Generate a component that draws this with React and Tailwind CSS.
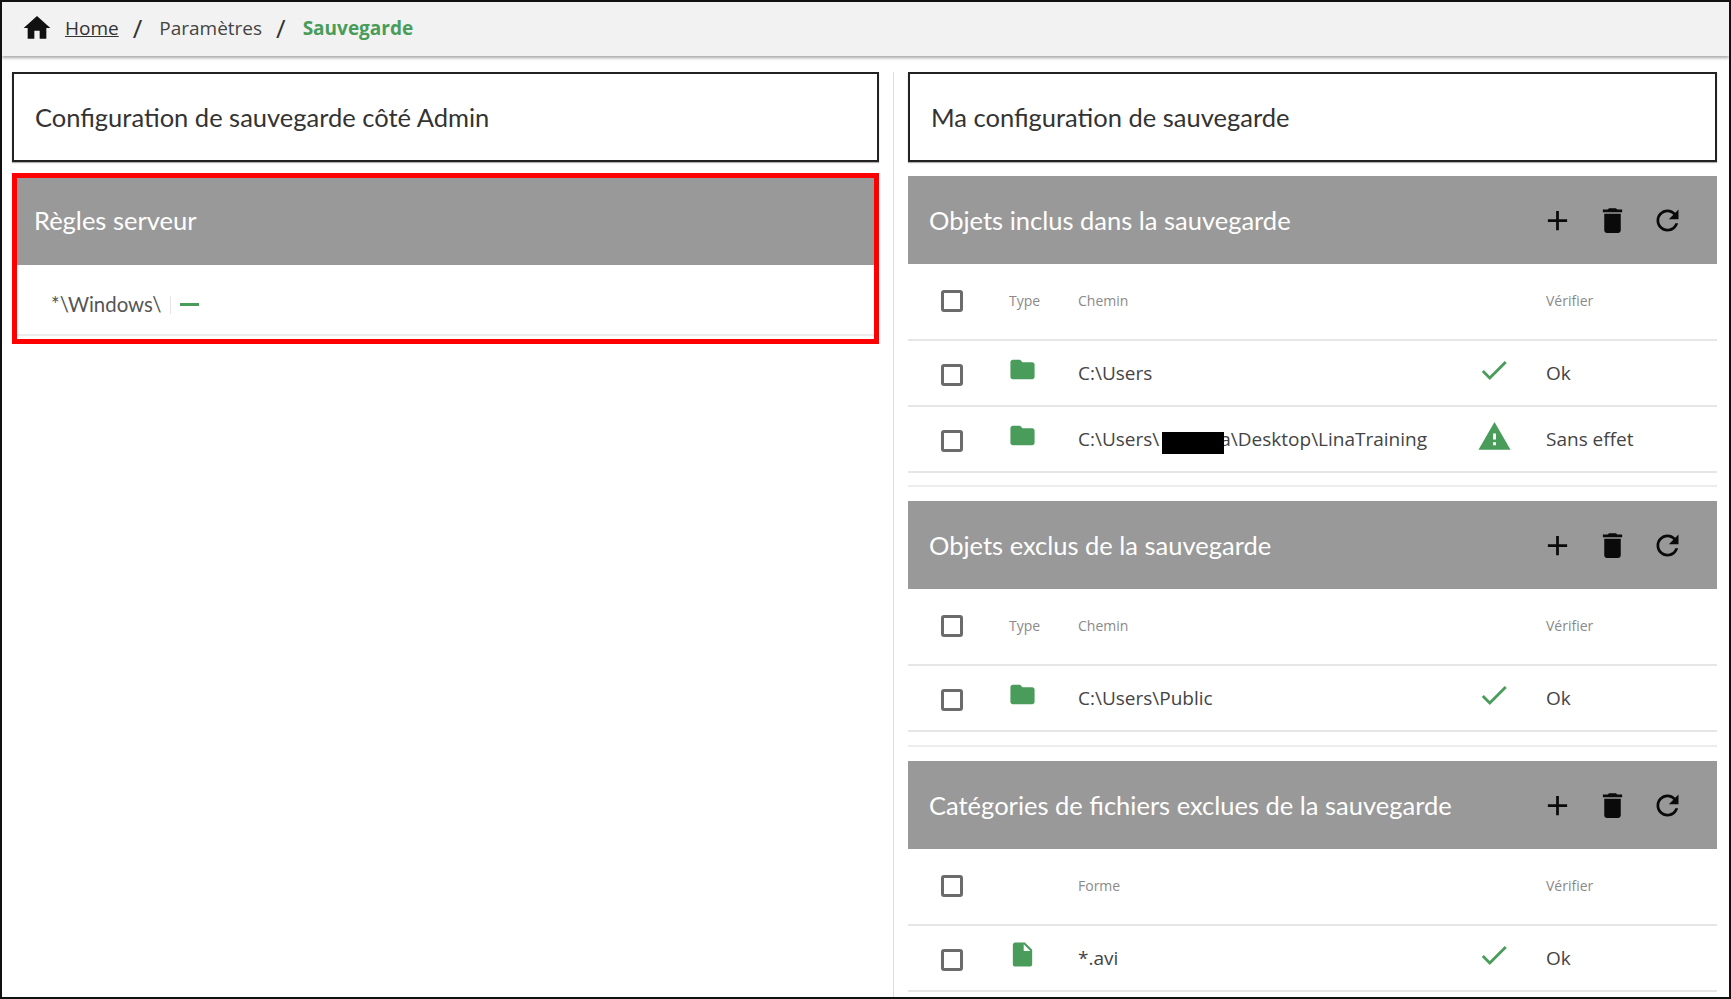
const Icon = ({ d, className }) => (
  <svg viewBox="0 0 24 24" fill="currentColor" className={className}><path d={d} /></svg>
);
const P = {
  home: "M10 20v-6h4v6h5v-8h3L12 3 2 12h3v8z",
  folder: "M10 4H4c-1.1 0-1.99.9-1.99 2L2 18c0 1.1.9 2 2 2h16c1.1 0 2-.9 2-2V8c0-1.1-.9-2-2-2h-8l-2-2z",
  del: "M6 19c0 1.1.9 2 2 2h8c1.1 0 2-.9 2-2V7H6v12zM19 4h-3.5l-1-1h-5l-1 1H5v2h14V4z",
  refresh: "M17.65 6.35C16.2 4.9 14.21 4 12 4c-4.42 0-7.99 3.58-7.99 8s3.57 8 7.99 8c3.73 0 6.84-2.55 7.73-6h-2.08c-.82 2.33-3.04 4-5.65 4-3.31 0-6-2.69-6-6s2.69-6 6-6c1.66 0 3.14.69 4.22 1.78L13 11h7V4l-2.35 2.35z",
  add: "M19 13h-6v6h-2v-6H5v-2h6V5h2v6h6v2z",
  warn: "M1 21h22L12 2 1 21zm12-3h-2v-2h2v2zm0-4h-2v-4h2v4z",
  check: "M9 16.17L4.83 12l-1.42 1.41L9 19 21 7l-1.41-1.41z",
  file: "M14 2H6c-1.1 0-1.99.9-1.99 2L4 20c0 1.1.89 2 1.99 2H18c1.1 0 2-.9 2-2V8l-6-6zm-1 7V3.5L18.5 9H13z",
};
const cols = "grid grid-cols-[101px_69px_382px_68px_1fr] items-center";
const Box = () => <span className="ml-[33px] block h-[22px] w-[22px] rounded-[3px] border-[3px] border-[#6b6b6b] bg-white" />;

const Title = ({ children }) => (
  <div className="flex h-[90px] items-center border-2 border-[#222] bg-white pl-[21px] text-[25.5px] text-[#333] font-['Lato',sans-serif] shadow-[0_1px_1px_rgba(0,0,0,0.3)]">
    {children}
  </div>
);

const SectionHead = ({ title }) => (
  <div className="flex h-[88px] items-center justify-between bg-[#999999] pl-[21px] pt-[1px] text-[25.5px] text-white font-['Lato',sans-serif]">
    <span>{title}</span>
    <div className="flex items-center gap-[22px] pr-[33px] text-[#0a0a0a]">
      <Icon d={P.add} className="h-[33px] w-[33px]" />
      <Icon d={P.del} className="h-[33px] w-[33px]" />
      <Icon d={P.refresh} className="h-[33px] w-[33px]" />
    </div>
  </div>
);

const HeadRow = ({ type = "Type", path = "Chemin" }) => (
  <div className={cols + " h-[77px] border-b-2 border-[#e6e6e6] pb-[2px] text-[14px] text-[#8a8a8a]"}>
    <Box />
    <span>{type}</span>
    <span>{path}</span>
    <span />
    <span className="pl-[18px]">Vérifier</span>
  </div>
);

const Row = ({ icon = "folder", path, status = "check", label = "Ok" }) => (
  <div className={cols + " h-[66px] border-b-2 border-[#e6e6e6] text-[19px] text-[#444]"}>
    <span className="pt-[3px]"><Box /></span>
    <span className="pb-[7px] text-[#499c59]">
      <Icon d={P[icon]} className="-ml-[1px] h-[29px] w-[29px]" />
    </span>
    <span className="whitespace-nowrap">{path}</span>
    <span className="flex justify-center pb-[6px] text-[#499c59]">
      <Icon d={P[status]} className={status === "warn" ? "h-[35px] w-[35px]" : "h-[34px] w-[34px]"} />
    </span>
    <span className="pl-[18px]">{label}</span>
  </div>
);

const Spacer = ({ className }) => <div className={"mb-[14px] border-b-2 border-[#ececec] " + className} />;

export default function App() {
  return (
    <div className="h-[999px] w-[1731px] overflow-hidden border-2 border-[#111] bg-white font-['Open_Sans',sans-serif]">
      <div className="flex h-[54px] items-center bg-[#f2f2f2] pb-[2px] pl-[19px] shadow-[0_2px_3px_rgba(0,0,0,0.35)]">
        <Icon d={P.home} className="h-[32px] w-[32px] text-[#111]" />
        <a className="ml-[12px] text-[19px] text-[#333] underline">Home</a>
        <span className="ml-[14px] text-[26px] text-[#333]">/</span>
        <span className="ml-[17px] text-[19px] text-[#444]">Paramètres</span>
        <span className="ml-[14px] text-[26px] text-[#333]">/</span>
        <span className="ml-[17px] text-[19px] font-bold text-[#499c59]">Sauvegarde</span>
      </div>
      <div className="flex h-[941px] pt-[16px] pl-[10px]">
        <div className="w-[867px]">
          <Title>Configuration de sauvegarde côté Admin</Title>
          <div className="mt-[11px] h-[171px] border-[5px] border-[#ff0000]">
            <div className="flex h-[87px] items-center bg-[#999999] pb-[2px] pl-[17px] text-[25.5px] text-white font-['Lato',sans-serif]">
              Règles serveur
            </div>
            <div className="flex h-[71px] items-center border-b-2 border-[#ececec] pl-[34px] pt-[10px] text-[20.4px] text-[#555] font-['Lato',sans-serif]">
              <span>*\Windows\</span>
              <span className="ml-[9px] h-[18px] w-px bg-[#e5e5e5]" />
              <span className="ml-[9px] h-[3px] w-[19px] bg-[#499c59]" />
            </div>
          </div>
        </div>
        <div className="ml-[14px] mr-[13px] w-px bg-[#dcdcdc]" />
        <div className="ml-[1px] w-[809px]">
          <Title>Ma configuration de sauvegarde</Title>
          <div className="mt-[14px]">
            <SectionHead title="Objets inclus dans la sauvegarde" />
            <HeadRow />
            <Row path="C:\Users" />
            <Row
              path={
                <>
                  C:\Users\
                  <span className="relative z-10 ml-[3px] inline-block h-[22px] w-[62px] translate-y-[8px] bg-black" />
                  <span className="-ml-[4px]">a\Desktop\LinaTraining</span>
                </>
              }
              status="warn"
              label="Sans effet"
            />
            <Spacer className="h-[14px]" />
            <SectionHead title="Objets exclus de la sauvegarde" />
            <HeadRow />
            <Row path="C:\Users\Public" />
            <Spacer className="h-[15px]" />
            <SectionHead title="Catégories de fichiers exclues de la sauvegarde" />
            <HeadRow type="" path="Forme" />
            <Row icon="file" path="*.avi" />
          </div>
        </div>
      </div>
    </div>
  );
}
